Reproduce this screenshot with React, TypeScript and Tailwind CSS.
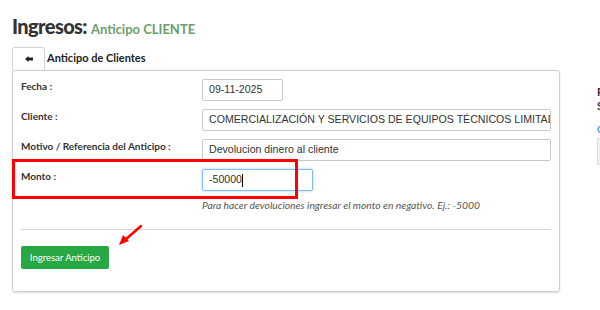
const FIELDS = [
  { label: "Fecha :", value: "09-11-2025", width: "w-[81px]" },
  {
    label: "Cliente :",
    value: "COMERCIALIZACIÓN Y SERVICIOS DE EQUIPOS TÉCNICOS LIMITADA",
    width: "w-full",
  },
  {
    label: "Motivo / Referencia del Anticipo :",
    value: "Devolucion dinero al cliente",
    width: "w-full",
  },
];

const Field = ({ value, width }: { value: string; width: string }) => (
  <div
    className={`${width} flex h-[22px] items-center overflow-hidden whitespace-nowrap rounded-[2px] border border-[#c9c9c9] bg-white px-[6px] font-['Liberation_Sans',Arial,sans-serif] text-[10.6px] text-[#333]`}
  >
    {value}
  </div>
);

export default function App() {
  return (
    <div className="relative h-[310px] w-[600px] overflow-hidden bg-white font-['Lato',sans-serif]">
      <div className="flex w-[560px] flex-col pl-[12px] pt-[16px]">
        {/* Titulo */}
        <h1 className="flex items-baseline gap-[4px] leading-none">
          <span className="text-[20px] font-black tracking-[-0.6px] text-[#333]">
            Ingresos:
          </span>
          <span className="text-[13px] font-bold text-[#6b9e6b]">
            Anticipo CLIENTE
          </span>
        </h1>

        {/* Pestaña */}
        <div className="mt-[11px] flex items-center">
          <button
            type="button"
            className="flex h-[23px] w-[33px] items-center justify-center rounded-t-[3px] border border-b-0 border-[#d3d3d3] bg-white"
          >
            <svg width="8" height="6" viewBox="0 0 8 6">
              <path d="M0 3 L3.5 0 V1.6 H8 V4.4 H3.5 V6 Z" fill="#222" />
            </svg>
          </button>
          <span className="ml-[2px] text-[11px] font-bold text-[#222]">
            Anticipo de Clientes
          </span>
        </div>

        {/* Formulario */}
        <div className="flex flex-col rounded-[3px] border border-[#d0d0d0] px-[8px] pb-[22px] pt-[8px] shadow-[0_1px_2px_rgba(0,0,0,0.15)]">
          <div className="grid grid-cols-[181px_1fr] gap-y-[8px]">
            {FIELDS.map((f) => (
              <div key={f.label} className="contents">
                <span className="text-[10px] font-bold text-[#333]">
                  {f.label}
                </span>
                <Field value={f.value} width={f.width} />
              </div>
            ))}
            <span className="text-[10px] font-bold text-[#333]">Monto :</span>
            <div className="flex flex-col">
              <div className="flex h-[22px] w-[111px] items-center rounded-[2px] border border-[#80bdff] bg-white px-[6px] font-['Liberation_Sans',Arial,sans-serif] text-[10.6px] text-[#333] shadow-[0_0_3px_rgba(0,123,255,0.35)]">
                -50000
                <span className="h-[13px] w-px bg-black" />
              </div>
              <p className="mt-[7px] text-[10.3px] italic text-[#555]">
                Para hacer devoluciones ingresar el monto en negativo. Ej.: -5000
              </p>
            </div>
          </div>

          <hr className="mt-[16px] border-[#d5d5d5]" />

          <button
            type="button"
            className="mt-[16px] flex h-[23px] w-[88px] items-center justify-center rounded-[2px] bg-[#28a745] text-[9.5px] text-white"
          >
            Ingresar Anticipo
          </button>
        </div>
      </div>

      {/* Contenido lateral recortado */}
      <div className="absolute left-[597px] top-[85px] flex flex-col text-[11px] font-bold leading-[14px] text-[#3a2a3a]">
        <span>R</span>
        <span>S</span>
        <span className="mt-[9px] text-[10px] font-normal text-[#2a7ad0]">C</span>
        <div className="mt-[2px] h-[27px] w-[10px] border border-[#ddd] bg-[#f1f1f1]" />
      </div>

      {/* Anotaciones */}
      <div className="absolute left-[12px] top-[159px] h-[40px] w-[286px] border-[3px] border-[#f00]" />
      <svg
        className="absolute left-[114px] top-[222px]"
        width="32"
        height="28"
        viewBox="0 0 32 28"
      >
        <line x1="27" y1="4" x2="11" y2="18" stroke="#f00" strokeWidth="2.5" strokeLinecap="round" />
        <polygon points="5,23 9,13 15,19" fill="#f00" />
      </svg>
    </div>
  );
}
